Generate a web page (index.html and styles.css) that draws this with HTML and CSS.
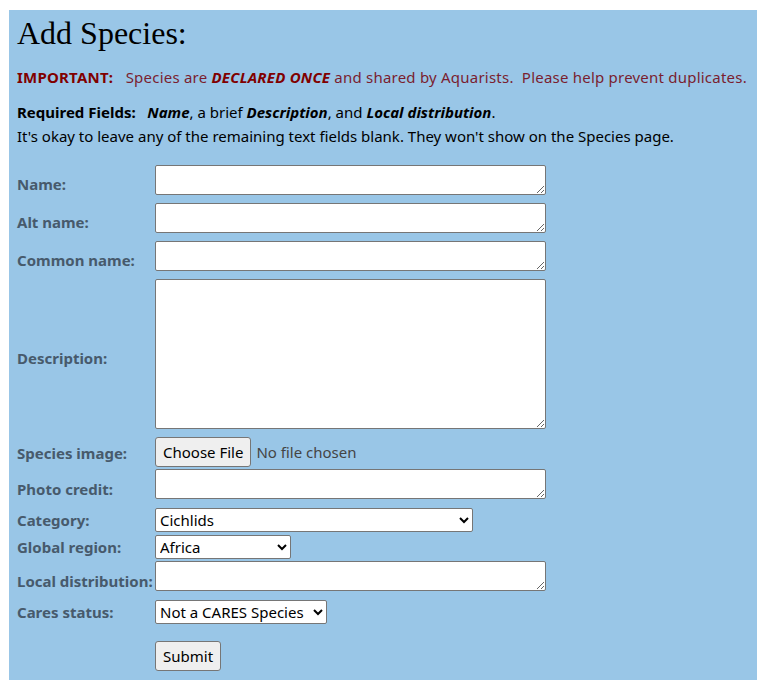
FILE: index.html
```html
<!DOCTYPE html>
<html>
<head>
<meta charset="utf-8">
<link rel="stylesheet" href="styles.css">
</head>
<body>
<div class="panel">
  <h1 class="title">Add Species:</h1>
  <p class="warn"><b class="warn-head">IMPORTANT:</b>&nbsp;&nbsp; Species are <b><i>DECLARED ONCE</i></b> and shared by Aquarists.&nbsp; Please help prevent duplicates.</p>
  <p class="req"><b>Required Fields:</b>&nbsp;&nbsp; <b><i>Name</i></b>, a brief <b><i>Description</i></b>, and <b><i>Local distribution</i></b>.<br>It's okay to leave any of the remaining text fields blank. They won't show on the Species page.</p>
  <form class="form">
    <div class="row row-ta"><label class="lbl">Name:</label><textarea class="ta"></textarea></div>
    <div class="row row-ta"><label class="lbl">Alt name:</label><textarea class="ta"></textarea></div>
    <div class="row row-ta"><label class="lbl">Common name:</label><textarea class="ta"></textarea></div>
    <div class="row row-desc"><label class="lbl">Description:</label><textarea class="ta ta-big"></textarea></div>
    <div class="row row-file"><label class="lbl">Species image:</label><span class="file"><button type="button" class="btn">Choose File</button><span class="nofile">No file chosen</span></span></div>
    <div class="row row-ta2"><label class="lbl">Photo credit:</label><textarea class="ta"></textarea></div>
    <div class="row row-sel"><label class="lbl lbl-sel">Category:</label><select class="sel sel-cat"><option>Cichlids</option></select></div>
    <div class="row row-sel2"><label class="lbl lbl-sel">Global region:</label><select class="sel sel-reg"><option>Africa</option></select></div>
    <div class="row row-ta2"><label class="lbl">Local distribution:</label><textarea class="ta"></textarea></div>
    <div class="row row-sel3"><label class="lbl lbl-sel">Cares status:</label><select class="sel sel-cares"><option>Not a CARES Species</option></select></div>
    <div class="row row-sub"><span class="lbl"></span><button type="button" class="btn">Submit</button></div>
  </form>
</div>
</body>
</html>
```
FILE: styles.css
```css
html, body { margin: 0; padding: 0; background: #fff; }
body { padding: 10px 9px 0 9px; font-family: "Noto Sans", sans-serif; }
.panel { background: #99c6e7; width: 748px; padding: 5px 8px 9px 8px; box-sizing: border-box; color: #000; font-size: 15px; }
.title { font-family: "Liberation Serif", serif; font-weight: normal; font-size: 32px; line-height: 36px; margin: 0; }
.warn { margin: 15px 0 0 0; line-height: 22px; color: #7a1e30; letter-spacing: 0.22px; }
.warn b { color: #800000; }
.req { margin: 12px 0 0 0; line-height: 24px; }
.form { margin-top: 17px; display: flex; flex-direction: column; }
.row { display: flex; align-items: flex-start; }
.lbl { width: 138px; flex: none; font-weight: bold; font-size: 15px; color: #475a6c; align-self: center; white-space: nowrap; }
.row-ta { height: 38px; }
.row-desc { height: 158px; }
.row-file { height: 32px; }
.row-ta2 { height: 39px; }
.row-sel { height: 27px; }
.row-sel2 { height: 26px; }
.row-sel3 { height: 41px; }
.row-sub { height: 30px; }
.lbl-sel { align-self: flex-start; line-height: 24px; }
.ta { width: 391px; height: 30px; box-sizing: border-box; border: 1px solid #767676; border-radius: 2px; background: #fff; margin: 0; padding: 2px; font-family: inherit; resize: both; }
.ta-big { height: 150px; }
.file { display: flex; align-items: center; }
.btn { height: 30px; box-sizing: border-box; border: 1px solid #767676; border-radius: 3px; background: #efefef; font-family: "Noto Sans", sans-serif; font-size: 15px; color: #000; padding: 0 7px; margin: 0; }
.nofile { margin-left: 5px; color: #444; font-size: 15px; }
.sel { height: 24px; box-sizing: border-box; border: 1px solid #767676; border-radius: 2px; background: #fff; font-family: "Noto Sans", sans-serif; font-size: 15px; margin: 0; color: #000; }
.sel-cat { width: 318px; }
.sel-reg { width: 136px; }
.sel-cares { width: 172px; }
```
